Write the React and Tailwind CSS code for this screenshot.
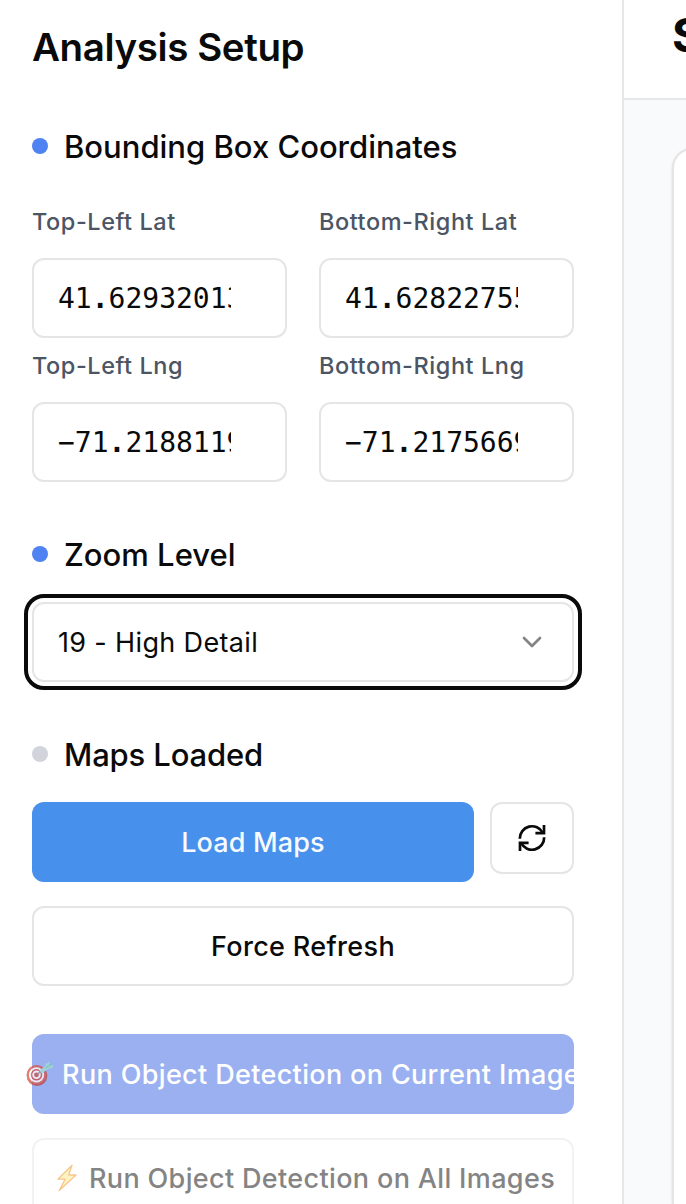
import React from "react";

function SectionTitle({ dot, className = "", children }) {
  return (
    <div className="flex h-12 items-center gap-4">
      <span className={`size-4 shrink-0 rounded-full ${dot}`} />
      <h2 className={`whitespace-nowrap pt-0.5 text-[31px] font-medium leading-[48px] ${className}`}>{children}</h2>
    </div>
  );
}

function Field({ label, value }) {
  const [whole, fraction] = value.split(".");
  return (
    <div className="flex flex-col">
      <label className="mb-5 h-8 whitespace-nowrap text-[23.5px] font-medium leading-8 tracking-[0.55px] text-[#4b5563]">
        {label}
      </label>
      <div className="flex h-20 items-center rounded-xl border-2 border-[#e5e5e5] pl-6 pt-0.5">
        <span className="w-[173px] overflow-hidden whitespace-nowrap font-['DejaVu_Sans_Mono',monospace] text-[28px] leading-10">
          {whole}
          <b>.</b>
          {fraction}
        </span>
      </div>
    </div>
  );
}

function ChevronIcon() {
  return (
    <svg width="32" height="32" viewBox="0 0 24 24" fill="none" stroke="#848484" strokeWidth="2" strokeLinecap="round" strokeLinejoin="round">
      <path d="m6 9 6 6 6-6" />
    </svg>
  );
}

function RefreshIcon() {
  return (
    <svg width="32" height="32" viewBox="0 0 32 32" fill="none" stroke="#0a0a0a" strokeWidth="2.7">
      <path d="M3.8 16.7A12.2 12.2 0 0 1 26.8 10.8M28.2 15.3A12.2 12.2 0 0 1 5.2 21.2" />
      <path d="M28 3v8.1h-8.6M4 29v-8.1h8.6" />
    </svg>
  );
}

function TargetIcon() {
  return (
    <svg className="shrink-0" width="28" height="28" viewBox="0 0 28 28" fill="none">
      <ellipse cx="11" cy="15.7" rx="10.3" ry="10.2" fill="#b8403a" />
      <circle cx="10.5" cy="14.8" r="9.8" fill="#dc5347" />
      <circle cx="10.5" cy="14.8" r="7.6" fill="#fff" />
      <circle cx="10.5" cy="14.8" r="5.8" fill="#d1453e" />
      <circle cx="10.5" cy="14.8" r="4.3" fill="#fff" />
      <circle cx="10.5" cy="14.8" r="2.4" fill="#d1453e" />
      <path d="m10.5 14.8 7-5" stroke="#888" strokeWidth="1.3" />
      <path d="m14.5 12 7-5.2" stroke="#a4ddd4" strokeWidth="4" />
      <path d="M19.5 7.5V4L24 1.5l-.5 3.2L28 5.5l-2.5 3-5.5.5z" fill="#9be0c4" />
      <path d="m19.5 8 6-4" stroke="#5fb0b4" strokeWidth="0.8" />
    </svg>
  );
}

function BoltIcon() {
  return (
    <svg className="shrink-0" width="20" height="28" viewBox="0 0 20 28" fill="none">
      <path d="M15 1.2.9 15.2h7.2L2.2 26.6 19 11h-7.3z" fill="#fff0b0" stroke="#f4b566" strokeWidth="1.3" strokeLinejoin="round" />
    </svg>
  );
}

export default function App() {
  return (
    <div className="flex h-[1204px] w-[686px] overflow-hidden bg-white font-['Inter',sans-serif] text-[#0a0a0a]">
      <aside className="flex w-[624px] shrink-0 flex-col border-r-2 border-[#e5e7eb] pl-8 pr-12">
        <h1 className="mt-5 h-14 shrink-0 whitespace-nowrap text-[38.5px] font-semibold leading-[54px] tracking-[-0.4px]">Analysis Setup</h1>

        <section className="mt-[46px] shrink-0">
          <SectionTitle dot="bg-[#4f83f1]">Bounding Box Coordinates</SectionTitle>
          <div className="mt-9 grid grid-cols-[255px_255px] gap-x-8 gap-y-3">
            <Field label="Top-Left Lat" value="41.629320137" />
            <Field label="Bottom-Right Lat" value="41.628227557" />
            <Field label="Top-Left Lng" value="−71.218811992" />
            <Field label="Bottom-Right Lng" value="−71.217566992" />
          </div>
        </section>

        <section className="mt-12 shrink-0">
          <SectionTitle dot="bg-[#4f83f1]">Zoom Level</SectionTitle>
          <button className="mt-6 flex h-20 w-full items-center justify-between rounded-xl border-2 border-[#e5e5e5] pl-6 pr-6 outline-4 outline-offset-4 outline-[#0a0a0a]">
            <span className="whitespace-nowrap pt-px text-[27px] leading-10 tracking-[0.35px]">19 - High Detail</span>
            <ChevronIcon />
          </button>
        </section>

        <section className="mt-12 shrink-0">
          <SectionTitle dot="bg-[#d1d5db]" className="tracking-[-0.15px]">Maps Loaded</SectionTitle>
          <div className="mt-6 flex gap-4">
            <button className="h-20 w-[442px] rounded-xl bg-[#4790ec] pt-0.5 text-[27px] font-medium tracking-[0.15px] text-[#f7faff]">Load Maps</button>
            <button className="flex h-[72px] w-[84px] items-center justify-center rounded-xl border-2 border-[#e5e5e5]">
              <RefreshIcon />
            </button>
          </div>
          <button className="mt-6 h-20 w-full rounded-xl border-2 border-[#e5e5e5] pt-0.5 text-[27px] font-medium tracking-[0.33px]">Force Refresh</button>
        </section>

        <div className="mt-12 flex shrink-0 flex-col gap-6">
          <button className="flex h-20 w-full items-center justify-center rounded-xl bg-[#9bb0f0] text-[27px] font-medium tracking-[0.35px] text-white">
            <span className="flex shrink-0 items-center gap-2 whitespace-nowrap">
              <span className="opacity-75"><TargetIcon /></span>
              <span className="pt-0.5">Run Object Detection on Current Image</span>
            </span>
          </button>
          <button className="flex h-20 w-full shrink-0 items-center justify-center rounded-xl border-2 border-[#f2f2f2] pl-1.5 text-[27px] font-medium tracking-[0.35px] text-[#848484]">
            <span className="flex shrink-0 items-center gap-3 whitespace-nowrap">
              <span className="opacity-75"><BoltIcon /></span>
              <span className="pt-0.5">Run Object Detection on All Images</span>
            </span>
          </button>
        </div>
      </aside>

      <main className="flex min-w-0 flex-1 flex-col overflow-hidden bg-[#f9fafb]">
        <header className="h-[100px] shrink-0 border-b-2 border-[#e5e7eb] bg-white pl-12">
          <span className="block text-[47px] font-bold leading-[70px]">S</span>
        </header>
        <div className="ml-12 mt-12 w-[400px] flex-1 rounded-tl-[20px] border-l-2 border-t-2 border-[#e5e5e5] bg-white shadow-sm" />
      </main>
    </div>
  );
}
